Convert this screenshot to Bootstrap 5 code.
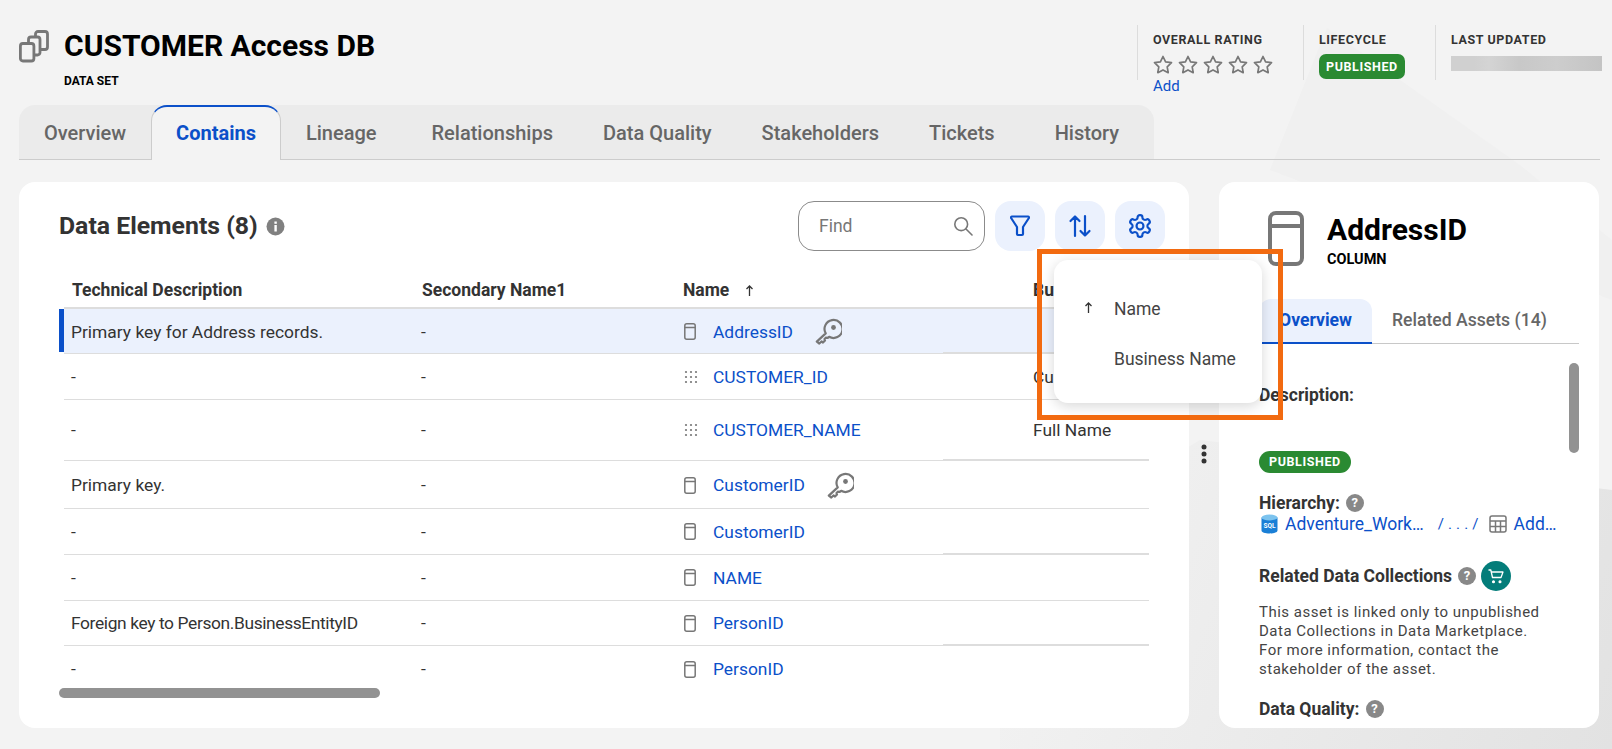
<!DOCTYPE html>
<html lang="en">
<head>
<meta charset="utf-8">
<title>CUSTOMER Access DB</title>
<link href="https://cdn.jsdelivr.net/npm/bootstrap@5.3.0/dist/css/bootstrap.min.css" rel="stylesheet">
<style>
html,body{height:100%;overflow:hidden}
body{font-family:Roboto,"Liberation Sans",sans-serif;background:#f3f3f3;color:#333;font-size:16px;position:relative;width:1612px;height:749px}
.bgart{position:absolute;left:0;top:0;z-index:0}
.pagewrap{position:relative;z-index:1}
a{color:#0b50c9;text-decoration:none}
svg{display:block;flex:none}
.hdr{height:105px}
.hdr-left{padding:28px 0 0 18px}
.hdr-title{font-size:30px;font-weight:700;line-height:35px;color:#000}
.hdr-sub{font-size:12px;font-weight:700;color:#000;line-height:14px;margin-top:11px}
.hdr-ico{margin-right:14px;margin-top:1px}
.meta{margin-top:25px;height:55px;border-left:1px solid #dcdcdc;padding-left:15px}
.meta-a{width:166px}.meta-b{width:132px}.meta-c{width:177px}
.meta-label{font-size:12.5px;font-weight:700;letter-spacing:.6px;line-height:14px;margin-top:8px;color:#333}
.stars{margin-top:8px;gap:5px}
.addlink{font-size:15px;line-height:18px;margin-top:3px;display:block}
.pub{display:inline-block;background:#2a8a32;color:#fff;font-size:12.5px;font-weight:700;letter-spacing:.6px;border-radius:7px;height:25px;line-height:25px;padding:0 7px;margin-top:7px}
.blur-bar{height:15px;width:151px;margin-top:9px;background:linear-gradient(90deg,#d0d0d0,#d0d0d0 15%,#d4d4d4 25%,#c8c8c8 45%,#cdcdcd 70%,#c4c4c4)}
.tabstrip{height:55px;margin:0 12px 0 19px;border-bottom:1px solid #ccc}
.tabset{background:#ebebeb;border-radius:16px 16px 0 0;height:54px;padding-right:10px}
.tabitem{padding:0 25px;font-size:20px;font-weight:500;color:#666;line-height:56px;height:54px;white-space:nowrap}
.tabitem-on{background:#f3f3f3;color:#0b50c9;font-weight:700;border-top:2px solid #0b50c9;border-left:1px solid #ccc;border-right:1px solid #ccc;border-radius:16px 16px 0 0;padding:0 24px;margin-bottom:-1px;height:55px;line-height:52px}
.tabwide1{margin-left:5px}
.tabwide2{margin-left:10px}
.mainrow{margin-top:22px;padding-left:19px}
.panel{background:#fff;border-radius:16px}
.panel-l{width:1170px;height:546px}
.panel-r{width:380px;height:546px;margin-left:30px;position:relative;overflow:hidden;padding:29px 20px 0 40px}
.toolbar{padding:19px 24px 0 40px;height:86px}
.tb-title{font-size:24.8px;font-weight:700;color:#333;gap:8px;line-height:50px}
.findbox{width:187px;height:50px;border:1px solid #8b8b8b;border-radius:16px;padding:0 11px 0 20px;color:#777;font-size:17.5px;background:#fff}
.icobtn{width:50px;height:50px;border-radius:16px;background:#ebf1fd;margin-left:10px;padding:0;border:0}
.datatbl{margin-left:45px;width:1085px;border-collapse:collapse;table-layout:fixed;font-size:17.4px;color:#333}
.datatbl th{font-weight:700;height:40px;padding:0 7px 5px 8px;border-bottom:2px solid #ddd;white-space:nowrap;vertical-align:bottom;font-size:17.5px;line-height:24px}
.datatbl th.namehead{padding-left:6px}
.datatbl td{padding:2px 7px 0;border-bottom:1px solid #ddd;white-space:nowrap;vertical-align:middle}
.datatbl td:last-child{padding-left:8px}
.datatbl tr:last-child td{border-bottom:0}
.datatbl tr.rowon td{background-color:#ebf1fd}
.datatbl tr.rowon td:first-child{position:relative}
.datatbl tr.rowon td:first-child::before{content:"";position:absolute;left:-5px;top:0;bottom:1px;width:5px;background:#0b50c9}
.datatbl td.seamA{background-image:linear-gradient(#ddd,#ddd);background-repeat:no-repeat;background-position:right bottom;background-size:82px 1px}
.datatbl td.seamB{background-image:linear-gradient(#ddd,#ddd);background-repeat:no-repeat;background-position:right bottom;background-size:100% 1px}
.namecell{gap:17px;padding-left:2px}
.namewrap{padding-left:1px}
.keyico{margin-left:5px}
.dotgrid{margin-right:-2px}
.tightcopy{letter-spacing:-.38px}
.hscroll{width:321px;height:10px;border-radius:5px;background:#929292;margin:-3px 0 0 40px}
.sortmenu{position:absolute;left:1054px;top:260px;width:208px;height:143px;background:#fff;border-radius:14px;box-shadow:0 3px 14px rgba(0,0,0,.16);z-index:5;padding-top:24px;font-size:17.5px;color:#444}
.sortrow{height:50px;line-height:50px;padding-left:60px;position:relative}
.sortrow svg{position:absolute;left:30px;top:18px}
.callout{position:absolute;left:1037px;top:249px;width:246px;height:171px;border:5px solid #f26a10;z-index:6;pointer-events:none}
.splitdots{position:absolute;left:1201px;top:444px;z-index:2}
.r-title{font-size:30px;font-weight:700;line-height:36px;color:#000;margin-top:1px}
.r-sub{font-size:14.5px;font-weight:700;color:#000;line-height:16px;margin-top:4px}
.r-head{gap:23px;padding-left:9px}
.r-tabs{margin-top:31px;border-bottom:1px solid #c8c8c8;height:45px}
.r-tab{font-size:17.6px;font-weight:500;color:#666;line-height:43px;padding:0 20px;white-space:nowrap}
.r-tab-on{background:#ebf1fd;color:#0b50c9;font-weight:700;border-bottom:2px solid #0b50c9;border-radius:12px 12px 0 0;height:45px;padding:0 20px}
.fieldlabel{font-weight:700;font-size:17.5px;line-height:20px;color:#333;gap:6px}
.vscroll{position:absolute;right:20px;top:181px;width:10px;height:90px;border-radius:5px;background:#929292}
.pillpub{display:inline-block;background:#2a8a32;color:#fff;font-size:12.5px;font-weight:700;letter-spacing:.6px;height:22px;line-height:22px;padding:0 10px;border-radius:11px}
.helpdot{width:18px;height:18px;border-radius:50%;background:#888;color:#fff;font-size:13px;font-weight:700;line-height:18px;text-align:center;display:inline-block}
.crumb{gap:7px;font-size:17.5px;line-height:20px;padding-left:2px}
.cartdot{width:30px;height:30px;border-radius:50%;background:#047d7a;margin-left:-1px}
.notepara{font-size:15px;line-height:19px;color:#444;letter-spacing:.5px;width:290px}
.sep-crumb{color:#0b50c9;font-size:15px;margin:0 3px 0 7px;letter-spacing:.2px;white-space:nowrap}
.gap-rel{margin-top:27px}
</style>
</head>
<body>
<svg class="bgart" width="1612" height="749" viewBox="0 0 1612 749">
  <defs><linearGradient id="bgg" gradientUnits="userSpaceOnUse" x1="1000" y1="500" x2="1612" y2="749"><stop offset="0" stop-color="#f3f3f3"/><stop offset="1" stop-color="#e2e2e2"/></linearGradient></defs>
  <polygon points="1327,28 1520,165 1612,240 1612,300 1270,170" fill="#f0f0f0"/>
  <polygon points="1000,560 1200,440 1612,490 1612,749 1000,749" fill="url(#bgg)"/>
</svg>
<div class="pagewrap">
  <header class="hdr d-flex">
    <div class="hdr-left d-flex">
      <svg class="hdr-ico" width="32" height="34" viewBox="0 0 32 34" fill="none" stroke="#777" stroke-width="2.800"><rect x="2.400" y="14.500" width="13.500" height="17.500" rx="2.500"/><path d="M10.500 13.500V10.500a2.500 2.500 0 0 1 2.500-2.500h6.500a2.500 2.500 0 0 1 2.500 2.500v13a2.500 2.500 0 0 1-2.500 2.500h-3"/><path d="M17.500 7V5a2.500 2.500 0 0 1 2.500-2.500h7a2.500 2.500 0 0 1 2.500 2.500v13a2.500 2.500 0 0 1-2.500 2.500h-4.500"/></svg>
      <div>
        <div class="hdr-title">CUSTOMER Access DB</div>
        <div class="hdr-sub">DATA SET</div>
      </div>
    </div>
    <div class="ms-auto d-flex">
      <div class="meta meta-a">
        <div class="meta-label">OVERALL RATING</div>
        <div class="stars d-flex">
          <svg width="20" height="19" viewBox="0 0 20 19" fill="none" stroke="#777" stroke-width="1.700" stroke-linejoin="round"><path d="M10 1.500l2.600 5.400 5.900.8-4.300 4.100 1 5.900L10 14.900l-5.200 2.800 1-5.900L1.500 7.700l5.900-.8z"/></svg>
          <svg width="20" height="19" viewBox="0 0 20 19" fill="none" stroke="#777" stroke-width="1.700" stroke-linejoin="round"><path d="M10 1.500l2.600 5.400 5.900.8-4.300 4.100 1 5.900L10 14.900l-5.200 2.800 1-5.900L1.500 7.700l5.900-.8z"/></svg>
          <svg width="20" height="19" viewBox="0 0 20 19" fill="none" stroke="#777" stroke-width="1.700" stroke-linejoin="round"><path d="M10 1.500l2.600 5.400 5.900.8-4.300 4.100 1 5.900L10 14.900l-5.200 2.800 1-5.900L1.500 7.700l5.900-.8z"/></svg>
          <svg width="20" height="19" viewBox="0 0 20 19" fill="none" stroke="#777" stroke-width="1.700" stroke-linejoin="round"><path d="M10 1.500l2.600 5.400 5.900.8-4.300 4.100 1 5.900L10 14.900l-5.200 2.800 1-5.900L1.500 7.700l5.900-.8z"/></svg>
          <svg width="20" height="19" viewBox="0 0 20 19" fill="none" stroke="#777" stroke-width="1.700" stroke-linejoin="round"><path d="M10 1.500l2.600 5.400 5.900.8-4.300 4.100 1 5.900L10 14.900l-5.200 2.800 1-5.900L1.500 7.700l5.900-.8z"/></svg>
        </div>
        <a class="addlink" href="#">Add</a>
      </div>
      <div class="meta meta-b">
        <div class="meta-label">LIFECYCLE</div>
        <span class="pub">PUBLISHED</span>
      </div>
      <div class="meta meta-c">
        <div class="meta-label">LAST UPDATED</div>
        <div class="blur-bar"></div>
      </div>
    </div>
  </header>

  <div class="tabstrip">
    <nav class="tabset d-inline-flex">
      <div class="tabitem">Overview</div>
      <div class="tabitem tabitem-on">Contains</div>
      <div class="tabitem">Lineage</div>
      <div class="tabitem tabwide1">Relationships</div>
      <div class="tabitem">Data Quality</div>
      <div class="tabitem">Stakeholders</div>
      <div class="tabitem">Tickets</div>
      <div class="tabitem tabwide2">History</div>
    </nav>
  </div>

  <main class="mainrow d-flex">
    <section class="panel panel-l">
      <div class="toolbar d-flex align-items-start">
        <div class="tb-title d-flex align-items-center">Data Elements (8)
          <svg width="19" height="19" viewBox="0 0 19 19"><circle cx="9.500" cy="9.500" r="9" fill="#808080"/><rect x="8.400" y="8" width="2.400" height="6.500" fill="#fff"/><rect x="8.400" y="4.500" width="2.400" height="2.300" fill="#fff"/></svg>
        </div>
        <div class="ms-auto d-flex">
          <div class="findbox d-flex align-items-center justify-content-between">Find
            <svg width="20" height="20" viewBox="0 0 20 20" fill="none" stroke="#777" stroke-width="1.600"><circle cx="8.200" cy="8.200" r="6.400"/><path d="M13 13l6 6" stroke-linecap="round"/></svg>
          </div>
          <button class="icobtn d-flex align-items-center justify-content-center" type="button" aria-label="Filter">
            <svg width="20" height="22" viewBox="0 0 20 22" fill="none" stroke="#0b50c9" stroke-width="2.200" stroke-linejoin="round"><path d="M2 1.500h16a1 1 0 0 1 .9 1.500L13 12v7a1 1 0 0 1-1 1H8a1 1 0 0 1-1-1v-7L1.100 3A1 1 0 0 1 2 1.500z"/></svg>
          </button>
          <button class="icobtn d-flex align-items-center justify-content-center" type="button" aria-label="Sort">
            <svg width="24" height="24" viewBox="0 0 24 24" fill="none" stroke="#0b50c9" stroke-width="2.200" stroke-linecap="round" stroke-linejoin="round"><path d="M7 22V2.500M2.500 7L7 2.500 11.500 7M17 2v19.500M12.500 17l4.500 4.500 4.500-4.500"/></svg>
          </button>
          <button class="icobtn d-flex align-items-center justify-content-center" type="button" aria-label="Settings">
            <svg width="26" height="26" viewBox="0 0 24 24" fill="none" stroke="#0b50c9" stroke-width="2" stroke-linejoin="round"><path d="M12.220 2h-.44a2 2 0 0 0-2 2v.18a2 2 0 0 1-1 1.730l-.43.25a2 2 0 0 1-2 0l-.15-.08a2 2 0 0 0-2.730.73l-.22.38a2 2 0 0 0 .73 2.730l.15.1a2 2 0 0 1 1 1.720v.51a2 2 0 0 1-1 1.740l-.15.09a2 2 0 0 0-.73 2.730l.22.38a2 2 0 0 0 2.730.73l.15-.08a2 2 0 0 1 2 0l.43.25a2 2 0 0 1 1 1.730V20a2 2 0 0 0 2 2h.44a2 2 0 0 0 2-2v-.18a2 2 0 0 1 1-1.730l.43-.25a2 2 0 0 1 2 0l.15.08a2 2 0 0 0 2.730-.73l.22-.39a2 2 0 0 0-.73-2.730l-.15-.08a2 2 0 0 1-1-1.740v-.5a2 2 0 0 1 1-1.740l.15-.09a2 2 0 0 0 .73-2.730l-.22-.38a2 2 0 0 0-2.730-.73l-.15.08a2 2 0 0 1-2 0l-.43-.25a2 2 0 0 1-1-1.730V4a2 2 0 0 0-2-2z"/><circle cx="12" cy="12" r="3.200"/></svg>
          </button>
        </div>
      </div>

      <table class="datatbl">
        <colgroup><col style="width:350px"><col style="width:262px"><col style="width:349px"><col style="width:124px"></colgroup>
        <thead>
          <tr><th>Technical Description</th><th>Secondary Name1</th><th class="namehead"><div class="namewrap d-flex align-items-center">Name
            <svg class="ms-3" width="9" height="11" viewBox="0 0 9 11" fill="none" stroke="#333" stroke-width="1.300"><path d="M4.500 11V1M1.500 4l3-3 3 3"/></svg></div></th><th>Business Name</th></tr>
        </thead>
        <tbody>
          <tr class="rowon" style="height:45px"><td>Primary key for Address records.</td><td>-</td><td class="seamA"><div class="namewrap namecell d-flex align-items-center">
            <svg width="12" height="17" viewBox="0 0 12 17" fill="none" stroke="#777" stroke-width="1.500"><rect x=".8" y=".8" width="10.400" height="15.400" rx="2"/><path d="M.8 4.500h10.400"/></svg><a href="#">AddressID</a>
            <svg class="keyico" width="27" height="27" viewBox="0 0 27 27" fill="none" stroke="#777" stroke-width="2.200" stroke-linejoin="round"><path d="M10.700 15.400L1.800 23.600l2.500 1.900 2.200-2 1.500 1 2-2-.5-1.500 1.500-1.300 1.500.3 1.600-1.200A9 9 0 1 0 10.700 15.400z"/><circle cx="18.500" cy="9.500" r="2.400" fill="#777" stroke="none"/></svg></div></td><td class="seamB"></td></tr>
          <tr style="height:46px"><td>-</td><td>-</td><td><div class="namewrap namecell d-flex align-items-center">
            <svg class="dotgrid" width="14" height="14" viewBox="0 0 14 14" fill="#777"><circle cx="2" cy="2" r="1.100"/><circle cx="7" cy="2" r="1.100"/><circle cx="12" cy="2" r="1.100"/><circle cx="2" cy="7" r="1.100"/><circle cx="7" cy="7" r="1.100"/><circle cx="12" cy="7" r="1.100"/><circle cx="2" cy="12" r="1.100"/><circle cx="7" cy="12" r="1.100"/><circle cx="12" cy="12" r="1.100"/></svg><a href="#">CUSTOMER_ID</a></div></td><td>Customer ID</td></tr>
          <tr style="height:61px"><td>-</td><td>-</td><td class="seamA"><div class="namewrap namecell d-flex align-items-center">
            <svg class="dotgrid" width="14" height="14" viewBox="0 0 14 14" fill="#777"><circle cx="2" cy="2" r="1.100"/><circle cx="7" cy="2" r="1.100"/><circle cx="12" cy="2" r="1.100"/><circle cx="2" cy="7" r="1.100"/><circle cx="7" cy="7" r="1.100"/><circle cx="12" cy="7" r="1.100"/><circle cx="2" cy="12" r="1.100"/><circle cx="7" cy="12" r="1.100"/><circle cx="12" cy="12" r="1.100"/></svg><a href="#">CUSTOMER_NAME</a></div></td><td class="seamB">Full Name</td></tr>
          <tr style="height:48px"><td>Primary key.</td><td>-</td><td><div class="namewrap namecell d-flex align-items-center">
            <svg width="12" height="17" viewBox="0 0 12 17" fill="none" stroke="#777" stroke-width="1.500"><rect x=".8" y=".8" width="10.400" height="15.400" rx="2"/><path d="M.8 4.500h10.400"/></svg><a href="#">CustomerID</a>
            <svg class="keyico" width="27" height="27" viewBox="0 0 27 27" fill="none" stroke="#777" stroke-width="2.200" stroke-linejoin="round"><path d="M10.700 15.400L1.800 23.600l2.500 1.900 2.200-2 1.500 1 2-2-.5-1.500 1.500-1.300 1.500.3 1.600-1.200A9 9 0 1 0 10.700 15.400z"/><circle cx="18.500" cy="9.500" r="2.400" fill="#777" stroke="none"/></svg></div></td><td></td></tr>
          <tr style="height:46px"><td>-</td><td>-</td><td class="seamA"><div class="namewrap namecell d-flex align-items-center">
            <svg width="12" height="17" viewBox="0 0 12 17" fill="none" stroke="#777" stroke-width="1.500"><rect x=".8" y=".8" width="10.400" height="15.400" rx="2"/><path d="M.8 4.500h10.400"/></svg><a href="#">CustomerID</a></div></td><td class="seamB"></td></tr>
          <tr style="height:46px"><td>-</td><td>-</td><td><div class="namewrap namecell d-flex align-items-center">
            <svg width="12" height="17" viewBox="0 0 12 17" fill="none" stroke="#777" stroke-width="1.500"><rect x=".8" y=".8" width="10.400" height="15.400" rx="2"/><path d="M.8 4.500h10.400"/></svg><a href="#">NAME</a></div></td><td></td></tr>
          <tr style="height:45px"><td class="tightcopy">Foreign key to Person.BusinessEntityID</td><td>-</td><td class="seamA"><div class="namewrap namecell d-flex align-items-center">
            <svg width="12" height="17" viewBox="0 0 12 17" fill="none" stroke="#777" stroke-width="1.500"><rect x=".8" y=".8" width="10.400" height="15.400" rx="2"/><path d="M.8 4.500h10.400"/></svg><a href="#">PersonID</a></div></td><td class="seamB"></td></tr>
          <tr style="height:46px"><td>-</td><td>-</td><td><div class="namewrap namecell d-flex align-items-center">
            <svg width="12" height="17" viewBox="0 0 12 17" fill="none" stroke="#777" stroke-width="1.500"><rect x=".8" y=".8" width="10.400" height="15.400" rx="2"/><path d="M.8 4.500h10.400"/></svg><a href="#">PersonID</a></div></td><td></td></tr>
        </tbody>
      </table>
      <div class="hscroll"></div>
    </section>

    <aside class="panel panel-r">
      <div class="r-head d-flex">
        <svg width="36" height="55" viewBox="0 0 36 55" fill="none" stroke="#777" stroke-width="4"><rect x="2" y="2" width="32" height="51" rx="6"/><path d="M2 15h32"/></svg>
        <div>
          <div class="r-title">AddressID</div>
          <div class="r-sub">COLUMN</div>
        </div>
      </div>
      <div class="r-tabs d-flex">
        <div class="r-tab r-tab-on">Overview</div>
        <div class="r-tab">Related Assets (14)</div>
      </div>
      <div class="fieldlabel" style="margin-top:41px">Description:</div>
      <div style="margin-top:44px"><span class="pillpub">PUBLISHED</span></div>
      <div class="fieldlabel d-flex align-items-center" style="margin-top:20px">Hierarchy: <span class="helpdot">?</span></div>
      <div class="crumb d-flex align-items-center" style="margin-top:1px">
        <svg width="17" height="20" viewBox="0 0 17 20"><path d="M.500 3.500v13c0 1.800 3.600 3 8 3s8-1.200 8-3v-13z" fill="#1a7fd6"/><ellipse cx="8.500" cy="3.500" rx="8" ry="3" fill="#7cc3ee"/><text x="8.500" y="14" font-size="6.500" fill="#fff" text-anchor="middle" font-family="Roboto" font-weight="700">SQL</text></svg>
        <a href="#">Adventure_Work…</a>
        <span class="sep-crumb">/ . . . /</span>
        <svg width="18" height="18" viewBox="0 0 18 18" fill="none" stroke="#777" stroke-width="1.500"><rect x="1" y="1" width="16" height="16" rx="2"/><path d="M1 6h16M1 11.500h16M6.500 6v11M11.500 6v11"/></svg>
        <a href="#">Add…</a>
      </div>
      <div class="fieldlabel gap-rel d-flex align-items-center">Related Data Collections <span class="helpdot">?</span>
        <span class="cartdot d-flex align-items-center justify-content-center">
          <svg width="16" height="15" viewBox="0 0 16 15" fill="none" stroke="#fff" stroke-width="1.300" stroke-linejoin="round"><path d="M.500 1h2.300l1.700 7.500h8.500L15 3H3.500"/><circle cx="5.500" cy="12.700" r=".9" fill="#fff"/><circle cx="12" cy="12.700" r=".9" fill="#fff"/></svg>
        </span>
      </div>
      <p class="notepara mb-0" style="margin-top:12px">This asset is linked only to unpublished Data Collections in Data Marketplace. For more information, contact the stakeholder of the asset.</p>
      <div class="fieldlabel d-flex align-items-center" style="margin-top:20px">Data Quality: <span class="helpdot">?</span></div>
      <div class="vscroll"></div>
    </aside>
  </main>
</div>

<svg class="splitdots" width="6" height="20" viewBox="0 0 6 20" fill="#333"><circle cx="3" cy="3" r="2.500"/><circle cx="3" cy="10" r="2.500"/><circle cx="3" cy="17" r="2.500"/></svg>

<div class="sortmenu">
  <div class="sortrow"><svg width="9" height="11" viewBox="0 0 9 11" fill="none" stroke="#333" stroke-width="1.300"><path d="M4.500 11V1M1.500 4l3-3 3 3"/></svg>Name</div>
  <div class="sortrow">Business Name</div>
</div>
<div class="callout"></div>

<script src="https://cdn.jsdelivr.net/npm/bootstrap@5.3.0/dist/js/bootstrap.bundle.min.js"></script>
</body>
</html>
